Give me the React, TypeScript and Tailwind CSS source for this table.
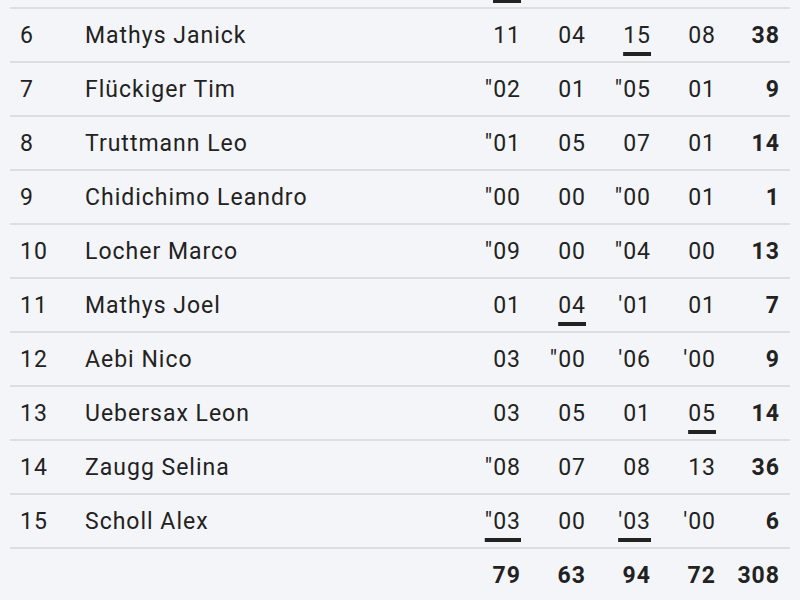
import React from "react";

type Cell = { v: string; u?: boolean };
type Row = { n: number; name: string; cells: Cell[]; total: string };

const rows: Row[] = [
  { n: 6, name: "Mathys Janick", cells: [{ v: "11" }, { v: "04" }, { v: "15", u: true }, { v: "08" }], total: "38" },
  { n: 7, name: "Flückiger Tim", cells: [{ v: '"02' }, { v: "01" }, { v: '"05' }, { v: "01" }], total: "9" },
  { n: 8, name: "Truttmann Leo", cells: [{ v: '"01' }, { v: "05" }, { v: "07" }, { v: "01" }], total: "14" },
  { n: 9, name: "Chidichimo Leandro", cells: [{ v: '"00' }, { v: "00" }, { v: '"00' }, { v: "01" }], total: "1" },
  { n: 10, name: "Locher Marco", cells: [{ v: '"09' }, { v: "00" }, { v: '"04' }, { v: "00" }], total: "13" },
  { n: 11, name: "Mathys Joel", cells: [{ v: "01" }, { v: "04", u: true }, { v: "'01" }, { v: "01" }], total: "7" },
  { n: 12, name: "Aebi Nico", cells: [{ v: "03" }, { v: '"00' }, { v: "'06" }, { v: "'00" }], total: "9" },
  { n: 13, name: "Uebersax Leon", cells: [{ v: "03" }, { v: "05" }, { v: "01" }, { v: "05", u: true }], total: "14" },
  { n: 14, name: "Zaugg Selina", cells: [{ v: '"08' }, { v: "07" }, { v: "08" }, { v: "13" }], total: "36" },
  { n: 15, name: "Scholl Alex", cells: [{ v: '"03', u: true }, { v: "00" }, { v: "'03", u: true }, { v: "'00" }], total: "6" },
];

const totals = ["79", "63", "94", "72", "308"];

export default function App() {
  return (
    <div
      className="w-full h-[600px] overflow-hidden bg-[#f4f5f8] px-[10px] text-[#222] text-[23px] tracking-[1px]"
      style={{ fontFamily: "Roboto, 'Noto Sans', sans-serif" }}
    >
      <div className="flex h-[7px]">
        <div className="flex-1" />
        <div className="w-[65px] flex justify-end">
          <div className="w-[28px] h-[3px] bg-[#222] mr-[-2px]" />
        </div>
        <div className="w-[65px]" />
        <div className="w-[65px]" />
        <div className="w-[65px]" />
        <div className="w-[65px] mr-[11px]" />
      </div>
      {rows.map((r) => (
        <div key={r.n} className="flex items-center h-[54px] pt-[2px] border-t-2 border-[#dddee4]">
          <div className="w-[75px] pl-[10px]">{r.n}</div>
          <div className="flex-1">{r.name}</div>
          {r.cells.map((c, i) => (
            <div key={i} className="w-[65px] text-right mr-[-1px] ml-[1px]">
              <span
                className={
                  c.u
                    ? "underline decoration-[4px] underline-offset-[9px] decoration-[#222]"
                    : ""
                }
              >
                {c.v}
              </span>
            </div>
          ))}
          <div className="w-[65px] mr-[10px] text-right font-bold">{r.total}</div>
        </div>
      ))}
      <div className="flex items-center h-[54px] pt-[2px] border-t-2 border-[#dddee4] font-bold">
        <div className="flex-1" />
        {totals.map((t, i) => (
          <div key={i} className={i === 4 ? "w-[65px] mr-[10px] text-right" : "w-[65px] text-right mr-[-1px] ml-[1px]"}>
            {t}
          </div>
        ))}
      </div>
    </div>
  );
}
